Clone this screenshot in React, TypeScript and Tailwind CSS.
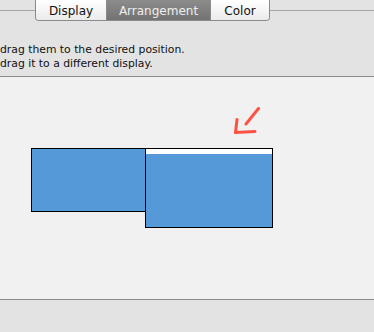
import React from "react";

const tabs = [
  { label: "Display", width: "w-[70px]" },
  { label: "Arrangement", width: "w-[104px]", active: true },
  { label: "Color", width: "w-[59px]" },
];

function TabBar() {
  return (
    <div className="flex h-[21px] items-start">
      <div className="mt-[10px] h-px w-[35px] bg-[#a6a6a6]" />
      <div className="flex h-[21px] overflow-hidden rounded-b-[4px] border border-t-0 border-[#8a8a8a]">
        {tabs.map((t, i) => (
          <div
            key={t.label}
            className={
              "flex items-center justify-center pt-[1px] text-[12px] " +
              t.width +
              (i > 0 ? " border-l border-[#8a8a8a]" : "") +
              (t.active
                ? " bg-gradient-to-b from-[#8c8c8c] to-[#737373] text-[#eeeeee]"
                : " bg-gradient-to-b from-white to-[#ebebeb] text-[#111]")
            }
          >
            {t.label}
          </div>
        ))}
      </div>
      <div className="mt-[10px] h-px flex-1 bg-[#a6a6a6]" />
    </div>
  );
}

function Arrow() {
  return (
    <svg className="absolute left-[228px] top-[25px]" width="36" height="36" viewBox="0 0 36 36">
      <g stroke="#ff4536" strokeWidth="3" strokeLinecap="round" fill="none" opacity="0.92">
        <path d="M30.5 6.5 L18 22" />
        <path d="M9 17.5 L7.5 30.5" />
        <path d="M7.5 30.5 L27 29.5" />
      </g>
    </svg>
  );
}

export default function App() {
  return (
    <div
      className="flex h-[332px] w-[374px] flex-col overflow-hidden bg-[#e3e3e3]"
      style={{ fontFamily: '"DejaVu Sans", sans-serif' }}
    >
      <div className="h-[76px] shrink-0">
        <TabBar />
        <div className="mt-[22px] text-[10.8px] leading-[14px] text-[#111]">
          <div>drag them to the desired position.</div>
          <div>drag it to a different display.</div>
        </div>
      </div>
      <div className="relative h-[224px] shrink-0 border-y border-[#8a8a8a] bg-[#f1f1f1]">
        <div className="absolute left-[31px] top-[71px] h-[64px] w-[115px] border border-black bg-[#5599d9]" />
        <div className="absolute left-[145px] top-[71px] flex h-[80px] w-[128px] flex-col border border-black bg-[#5599d9]">
          <div className="h-[5px] bg-white" />
        </div>
        <Arrow />
      </div>
      <div className="flex-1" />
    </div>
  );
}
